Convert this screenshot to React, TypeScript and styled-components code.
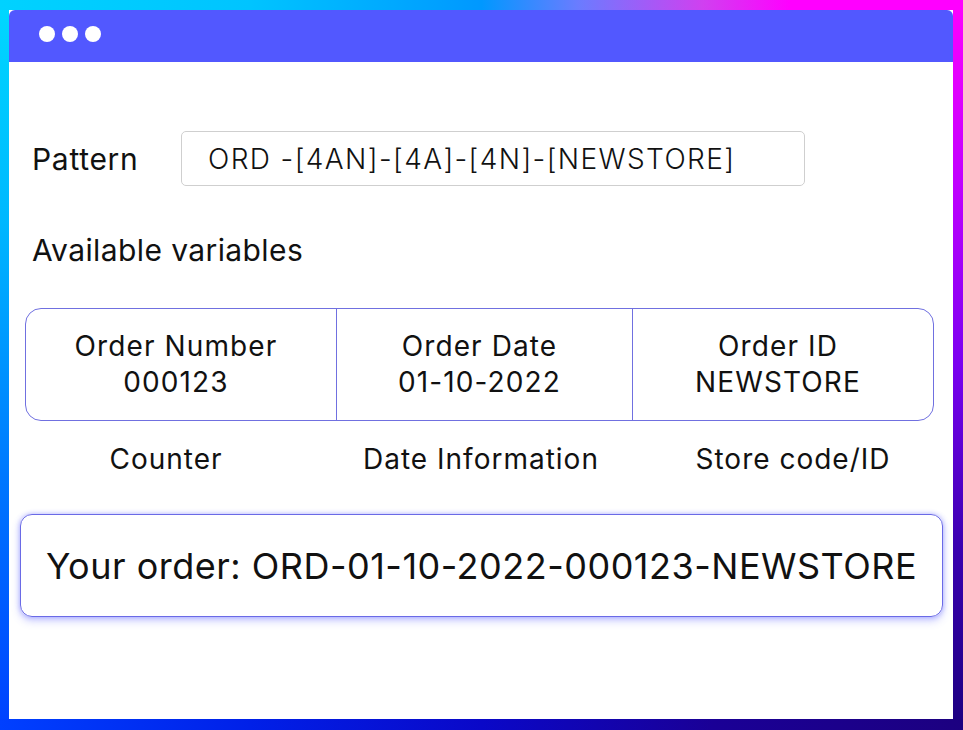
import React from 'react'
import styled, { createGlobalStyle } from 'styled-components'

const GlobalStyle = createGlobalStyle`
  html, body {
    margin: 0;
    padding: 0;
    background: #ffffff;
  }
  body {
    font-family: Inter, "Noto Sans", sans-serif;
    color: #111111;
  }
`

const Frame = styled.div`
  width: 963px;
  height: 730px;
  box-sizing: border-box;
  padding: 10px 10px 11px 9px;
  background:
    linear-gradient(to right, #00d2ff 0%, #00c4ff 26%, #0098ff 50%, #6a7cff 60%, #d040f0 73%, #ff00ff 82%, #ff00ff 100%) top left / 100% 10px no-repeat,
    linear-gradient(to right, #0040ff 0%, #0020e8 26%, #0a08c8 50%, #1a0096 74%, #1c0080 100%) bottom left / 100% 11px no-repeat,
    linear-gradient(to bottom, #00d8ff 0%, #00b8ff 30%, #0078ff 65%, #0040ff 100%) top left / 9px 100% no-repeat,
    linear-gradient(to bottom, #ff00ff 0%, #c000ff 25%, #7a00f0 50%, #3a00b0 75%, #1c0080 100%) top right / 10px 100% no-repeat,
    #ffffff;
`

const Window = styled.div`
  height: 100%;
  background: #ffffff;
  border-radius: 6px 6px 0 0;
  overflow: hidden;
  display: flex;
  flex-direction: column;
`

const TitleBar = styled.div`
  height: 52px;
  flex: none;
  background: #5258ff;
  display: flex;
  align-items: center;
  gap: 7px;
  padding-left: 30px;
  padding-bottom: 4px;
  box-sizing: border-box;
`

const Dot = styled.span`
  width: 16px;
  height: 16px;
  border-radius: 50%;
  background: #ffffff;
`

const Body = styled.div`
  display: flex;
  flex-direction: column;
`

const PatternRow = styled.div`
  display: flex;
  align-items: center;
  margin-top: 69px;
  padding-left: 23px;
`

const Label = styled.div<{ $spacing?: number }>`
  font-size: 30px;
  font-weight: 400;
  letter-spacing: ${p => p.$spacing ?? 0.7}px;
  width: 149px;
`

const PatternInput = styled.div`
  width: 624px;
  height: 55px;
  box-sizing: border-box;
  border: 1.5px solid #cfcfcf;
  border-radius: 5px;
  display: flex;
  align-items: center;
  padding-left: 26px;
  font-size: 28px;
  font-weight: 300;
  letter-spacing: 1.4px;
`

const SectionTitle = styled(Label)`
  width: auto;
  margin: 44px 0 0 23px;
  line-height: 40px;
`

const VarTable = styled.div`
  margin: 38px 19px 0 16px;
  height: 113px;
  box-sizing: border-box;
  border: 1.5px solid #7070e0;
  border-radius: 16px;
  display: grid;
  grid-template-columns: 311px 296px 1fr;
`

const VarCell = styled.div<{ $last?: boolean }>`
  display: flex;
  flex-direction: column;
  align-items: center;
  justify-content: center;
  border-right: ${p => (p.$last ? 'none' : '1.5px solid #7070e0')};
  font-size: 28px;
  letter-spacing: 1.1px;
  line-height: 36px;
  padding: 0 10px 1px 0;
`

const HintRow = styled.div`
  margin: 18px 0 0 16px;
  display: grid;
  grid-template-columns: 282px 348px 276px;
`

const Hint = styled.div`
  text-align: center;
  font-size: 28px;
  font-weight: 400;
  letter-spacing: 1px;
  line-height: 40px;
`

const ResultBox = styled.div`
  margin: 35px 10px 0 11px;
  height: 103px;
  box-sizing: border-box;
  border: 1.5px solid #6a6ae6;
  border-radius: 12px;
  box-shadow: 0 0 5px rgba(90, 96, 255, 0.45), 0 4px 8px rgba(90, 96, 255, 0.3);
  display: flex;
  align-items: center;
  justify-content: center;
  font-size: 36px;
  font-weight: 400;
  letter-spacing: 0.5px;
`

const variables = [
  { title: 'Order Number', value: '000123' },
  { title: 'Order Date', value: '01-10-2022' },
  { title: 'Order ID', value: 'NEWSTORE' },
]

const hints = ['Counter', 'Date Information', 'Store code/ID']

const App = () => {
  return (
    <>
      <GlobalStyle />
      <Frame>
        <Window>
          <TitleBar>
            <Dot />
            <Dot />
            <Dot />
          </TitleBar>
          <Body>
            <PatternRow>
              <Label>Pattern</Label>
              <PatternInput>ORD -[4AN]-[4A]-[4N]-[NEWSTORE]</PatternInput>
            </PatternRow>
            <SectionTitle $spacing={0.4}>Available variables</SectionTitle>
            <VarTable>
              {variables.map((v, i) => (
                <VarCell key={v.title} $last={i === variables.length - 1}>
                  <span>{v.title}</span>
                  <span>{v.value}</span>
                </VarCell>
              ))}
            </VarTable>
            <HintRow>
              {hints.map(h => (
                <Hint key={h}>{h}</Hint>
              ))}
            </HintRow>
            <ResultBox>Your order: ORD-01-10-2022-000123-NEWSTORE</ResultBox>
          </Body>
        </Window>
      </Frame>
    </>
  )
}

export default App
